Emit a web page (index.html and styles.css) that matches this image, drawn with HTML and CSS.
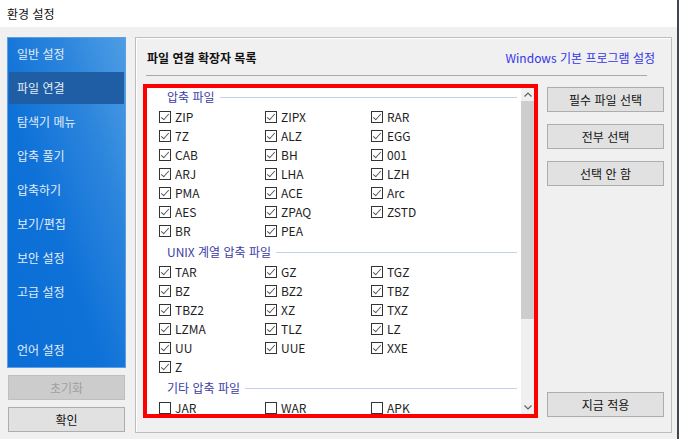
FILE: index.html
```html
<!DOCTYPE html>
<html lang="ko">
<head>
<meta charset="utf-8">
<title>환경 설정</title>
<link rel="stylesheet" href="styles.css">
</head>
<body>
<div class="window">
  <div class="titlebar">환경 설정</div>
  <div class="content">
    <div class="side-col">
      <nav class="sidebar">
        <div class="nav-item">일반 설정</div>
        <div class="nav-item active">파일 연결</div>
        <div class="nav-item">탐색기 메뉴</div>
        <div class="nav-item">압축 풀기</div>
        <div class="nav-item">압축하기</div>
        <div class="nav-item">보기/편집</div>
        <div class="nav-item">보안 설정</div>
        <div class="nav-item">고급 설정</div>
        <div class="nav-item last">언어 설정</div>
      </nav>
      <button class="btn disabled">초기화</button>
      <button class="btn">확인</button>
    </div>
    <section class="panel">
      <header class="panel-head">
        <span class="panel-title">파일 연결 확장자 목록</span>
        <span class="link">Windows 기본 프로그램 설정</span>
      </header>
      <div class="sep"></div>
      <div class="panel-body">
        <div class="listbox">
          <div class="list-content">
            <div class="group-head first"><span class="group-label">압축 파일</span><span class="group-line"></span></div>
            <div class="grid">
              <label class="item"><span class="cb on"></span>ZIP</label>
              <label class="item"><span class="cb on"></span>ZIPX</label>
              <label class="item"><span class="cb on"></span>RAR</label>
              <label class="item"><span class="cb on"></span>7Z</label>
              <label class="item"><span class="cb on"></span>ALZ</label>
              <label class="item"><span class="cb on"></span>EGG</label>
              <label class="item"><span class="cb on"></span>CAB</label>
              <label class="item"><span class="cb on"></span>BH</label>
              <label class="item"><span class="cb on"></span>001</label>
              <label class="item"><span class="cb on"></span>ARJ</label>
              <label class="item"><span class="cb on"></span>LHA</label>
              <label class="item"><span class="cb on"></span>LZH</label>
              <label class="item"><span class="cb on"></span>PMA</label>
              <label class="item"><span class="cb on"></span>ACE</label>
              <label class="item"><span class="cb on"></span>Arc</label>
              <label class="item"><span class="cb on"></span>AES</label>
              <label class="item"><span class="cb on"></span>ZPAQ</label>
              <label class="item"><span class="cb on"></span>ZSTD</label>
              <label class="item"><span class="cb on"></span>BR</label>
              <label class="item"><span class="cb on"></span>PEA</label>
            </div>
            <div class="group-head"><span class="group-label">UNIX 계열 압축 파일</span><span class="group-line"></span></div>
            <div class="grid">
              <label class="item"><span class="cb on"></span>TAR</label>
              <label class="item"><span class="cb on"></span>GZ</label>
              <label class="item"><span class="cb on"></span>TGZ</label>
              <label class="item"><span class="cb on"></span>BZ</label>
              <label class="item"><span class="cb on"></span>BZ2</label>
              <label class="item"><span class="cb on"></span>TBZ</label>
              <label class="item"><span class="cb on"></span>TBZ2</label>
              <label class="item"><span class="cb on"></span>XZ</label>
              <label class="item"><span class="cb on"></span>TXZ</label>
              <label class="item"><span class="cb on"></span>LZMA</label>
              <label class="item"><span class="cb on"></span>TLZ</label>
              <label class="item"><span class="cb on"></span>LZ</label>
              <label class="item"><span class="cb on"></span>UU</label>
              <label class="item"><span class="cb on"></span>UUE</label>
              <label class="item"><span class="cb on"></span>XXE</label>
              <label class="item"><span class="cb on"></span>Z</label>
            </div>
            <div class="group-head"><span class="group-label">기타 압축 파일</span><span class="group-line"></span></div>
            <div class="grid">
              <label class="item"><span class="cb"></span>JAR</label>
              <label class="item"><span class="cb"></span>WAR</label>
              <label class="item"><span class="cb"></span>APK</label>
            </div>
          </div>
          <div class="scrollbar">
            <div class="arrow">
              <svg width="8" height="5" viewBox="0 0 8 5"><polyline points="0.5,4.5 4,1 7.5,4.5" fill="none" stroke="#606060" stroke-width="1.2"/></svg>
            </div>
            <div class="thumb"></div>
            <div class="track"></div>
            <div class="arrow">
              <svg width="8" height="5" viewBox="0 0 8 5"><polyline points="0.5,0.5 4,4 7.5,0.5" fill="none" stroke="#606060" stroke-width="1.2"/></svg>
            </div>
          </div>
        </div>
        <div class="actions">
          <button class="btn">필수 파일 선택</button>
          <button class="btn">전부 선택</button>
          <button class="btn">선택 안 함</button>
          <button class="btn apply">지금 적용</button>
        </div>
      </div>
    </section>
  </div>
</div>
</body>
</html>
```
FILE: styles.css
```css
* { box-sizing: border-box; }
html, body { margin: 0; padding: 0; }
body {
  font-family: "Noto Sans CJK KR", "Noto Sans", sans-serif;
  font-size: 12px;
  color: #1e1e1e;
  background: #f0f0f0;
}
.window {
  width: 679px;
  height: 439px;
  background: #f0f0f0;
  border-right: 2px solid #3e4750;
  overflow: hidden;
}
.titlebar {
  height: 27px;
  line-height: 27px;
  background: #ffffff;
  padding-left: 7px;
  color: #111;
}
.content {
  display: flex;
  padding: 10px 0 0 7px;
  gap: 9px;
}
.side-col {
  width: 119px;
  display: flex;
  flex-direction: column;
  gap: 7px;
}
.sidebar {
  height: 331px;
  display: flex;
  flex-direction: column;
  border: 1px solid #5c9fe6;
  background: linear-gradient(to bottom left, #4e9de4 0%, #2a84dc 30%, #0e71d8 60%, #0a6ed6 100%);
  padding: 0 1px 1px 1px;
}
.nav-item {
  height: 32px;
  line-height: 32px;
  margin-bottom: 2px;
  padding-left: 8px;
  color: #e2edfa;
  white-space: nowrap;
}
.nav-item.active {
  background: #1f5da5;
}
.nav-item.last {
  margin-top: auto;
  margin-bottom: 0;
}
.btn {
  font-family: inherit;
  font-size: 12px;
  height: 25px;
  line-height: 21px;
  padding: 0;
  background: #e1e1e1;
  border: 1px solid #adadad;
  color: #111;
  text-align: center;
}
.side-col .btn { margin: 0 1px; }
.btn.disabled {
  background: #cccccc;
  border-color: #bfbfbf;
  color: #a0a0a0;
}
.panel {
  width: 537px;
  height: 396px;
  border: 1px solid #bdbdbd;
  box-shadow: inset 1px 1px 0 #ffffff;
  display: flex;
  flex-direction: column;
}
.panel-head {
  height: 37px;
  padding: 3px 16px 0 11px;
  display: flex;
  align-items: center;
  justify-content: space-between;
}
.panel-title {
  font-weight: bold;
  color: #111;
  line-height: 16px;
}
.link {
  color: #3434e8;
  line-height: 16px;
}
.sep {
  margin-left: 10px;
  width: 501px;
  height: 1px;
  background: #a9a9a9;
}
.panel-body {
  display: flex;
  gap: 9px;
  margin-top: 8px;
  margin-left: 7px;
}
.listbox {
  width: 395px;
  height: 334px;
  border: 4px solid #ff0000;
  background: #ffffff;
  display: flex;
  overflow: hidden;
}
.list-content {
  flex: 1;
  overflow: hidden;
  padding-right: 4px;
}
.group-head {
  display: flex;
  align-items: center;
  padding: 4px 0 2px 20px;
}
.group-head.first { padding-top: 1px; }
.group-label {
  line-height: 16px;
  color: #3c3ca6;
  white-space: nowrap;
}
.group-line {
  flex: 1;
  height: 1px;
  margin-left: 5px;
  background: #c3d1ec;
}
.grid {
  display: grid;
  grid-template-columns: repeat(3, 106px);
  grid-auto-rows: 19px;
  padding-left: 12px;
}
.item {
  display: flex;
  align-items: center;
  gap: 4px;
  line-height: 19px;
  color: #1e1e1e;
}
.cb {
  position: relative;
  width: 12px;
  height: 12px;
  border: 1px solid #333333;
  background: #ffffff;
  flex: none;
}
.cb.on::after {
  content: "";
  position: absolute;
  left: 3px;
  top: 0px;
  width: 3px;
  height: 7px;
  border: solid #555555;
  border-width: 0 1px 1px 0;
  transform: rotate(42deg);
}
.scrollbar {
  width: 13px;
  background: #f0f0f0;
  display: flex;
  flex-direction: column;
}
.arrow {
  height: 13px;
  display: flex;
  align-items: center;
  justify-content: center;
}
.thumb {
  height: 218px;
  background: #cdcdcd;
}
.track { flex: 1; }
.actions {
  width: 117px;
  height: 334px;
  display: flex;
  flex-direction: column;
  gap: 12px;
  padding: 3px 0 1px 0;
}
.actions .btn.apply { margin-top: auto; }
```
